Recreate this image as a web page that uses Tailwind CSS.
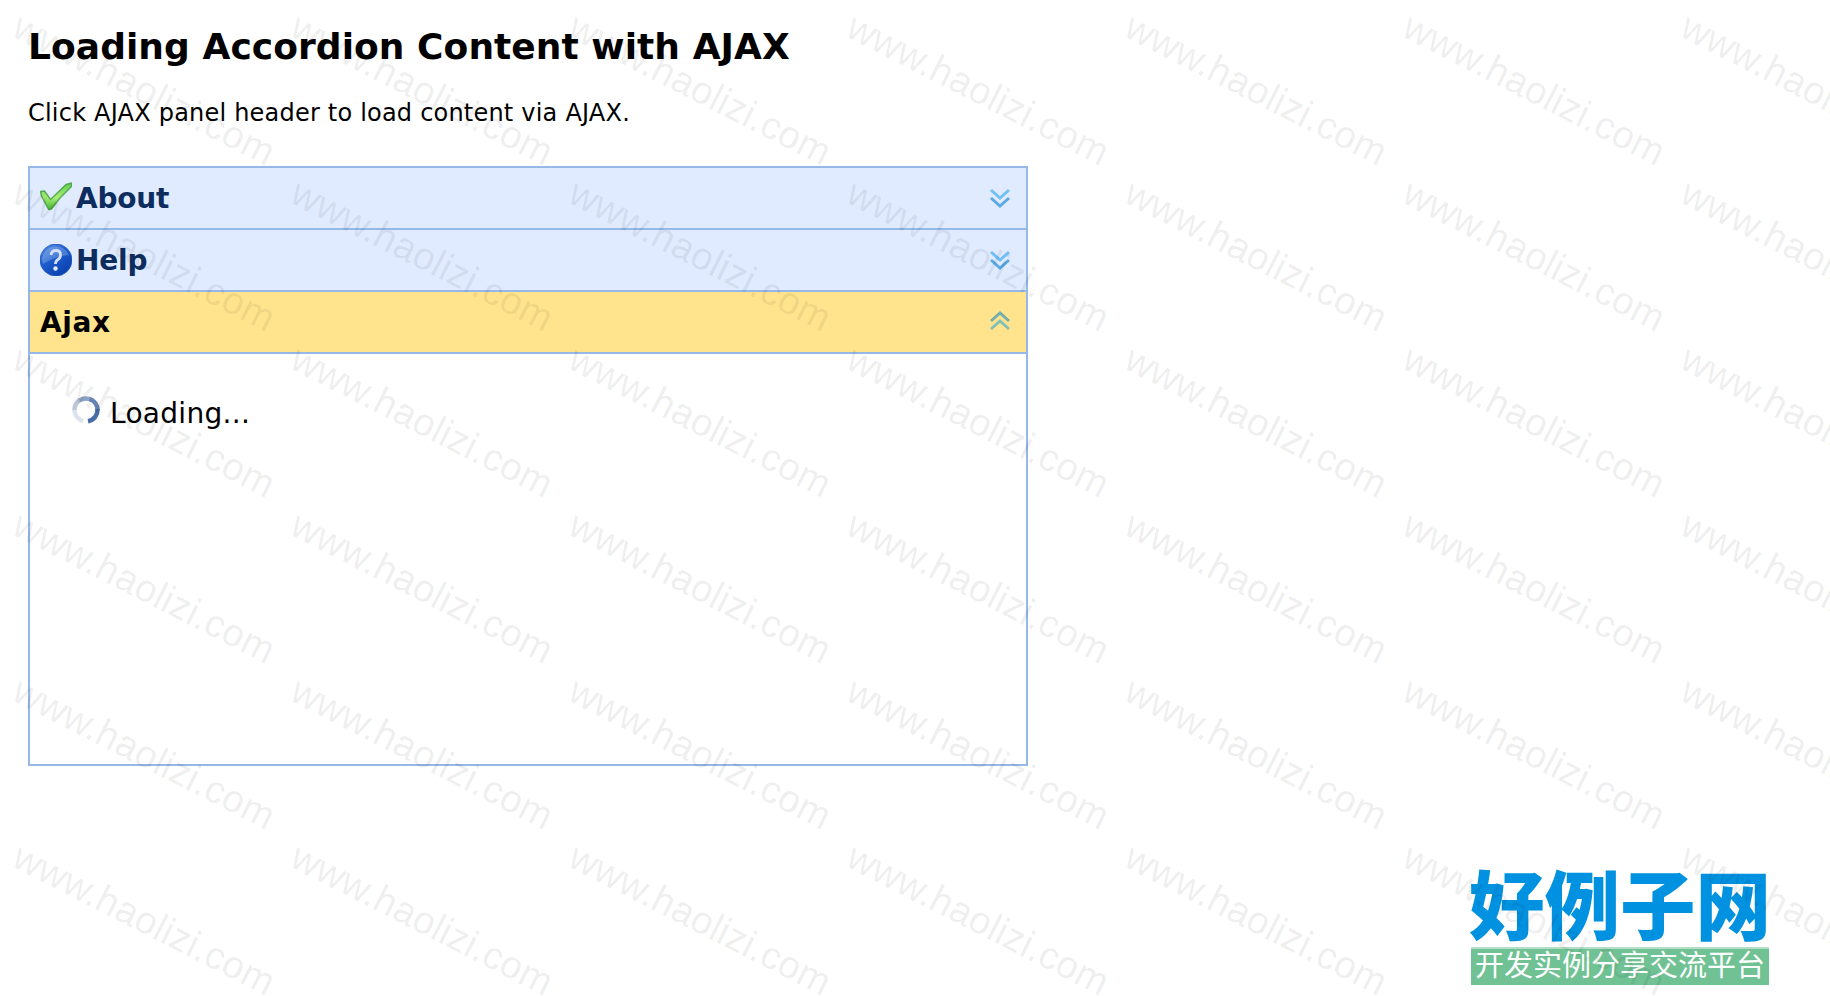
<!DOCTYPE html>
<html lang="en">
<head>
  <meta charset="UTF-8">
  <title>Loading Accordion Content with AJAX</title>
  <script src="https://cdn.jsdelivr.net/npm/@tailwindcss/browser@4"></script>
</head>
<body class="bg-white text-black font-['DejaVu_Sans',Verdana,sans-serif] h-screen overflow-hidden">
  <main class="pl-7 pt-[25px]">
    <h2 class="text-[36px] leading-[44px] font-bold tracking-[0.06px] whitespace-nowrap">Loading Accordion Content with AJAX</h2>
    <p class="mt-[30px] text-2xl leading-7 tracking-[0.21px] whitespace-nowrap">Click AJAX panel header to load content via AJAX.</p>

    <div class="mt-[39px] w-[1000px] h-[600px] border-2 border-[#95b8e7]">
      <div class="flex items-center h-[62px] px-[10px] bg-[#e0ebff] border-b-2 border-[#95b8e7]">
        <svg class="w-8 h-8" viewBox="0 0 32 32">
          <defs>
            <linearGradient id="green" x1="0" y1="0" x2="0" y2="1">
              <stop offset="0" stop-color="#5fce50"/>
              <stop offset="0.55" stop-color="#a8ee74"/>
              <stop offset="1" stop-color="#43b238"/>
            </linearGradient>
          </defs>
          <path d="M0.500 9.500 L4.500 9 L10.500 17.500 L26 2.500 L31.500 1 L31.500 4.500 L20 16 L11.500 27 L8.500 27.500 L1.500 14 Z" fill="url(#green)" stroke="#3f9a3c" stroke-opacity="0.800" stroke-width="1.400" stroke-linejoin="round"/>
        </svg>
        <span class="ml-1 pt-0.5 text-[28px] font-bold tracking-[-0.2px] text-[#0e2d5f]">About</span>
        <svg class="ml-auto mr-1 w-6 h-6" viewBox="0 0 24 24" fill="none" stroke-width="3">
          <path d="M3 4 L12 12 L21 4" stroke="#71c0f5"/>
          <path d="M3 12 L12 20 L21 12" stroke="#5aa9e6"/>
        </svg>
      </div>
      <div class="flex items-center h-[62px] px-[10px] bg-[#e0ebff] border-b-2 border-[#95b8e7]">
        <svg class="w-8 h-8" viewBox="0 0 32 32">
          <defs>
            <linearGradient id="blue" x1="0" y1="0" x2="0.700" y2="1">
              <stop offset="0" stop-color="#5d94e4"/>
              <stop offset="0.45" stop-color="#1d5fd0"/>
              <stop offset="1" stop-color="#0a3fae"/>
            </linearGradient>
          </defs>
          <circle cx="16" cy="16" r="16" fill="url(#blue)" stroke="#2458b8" stroke-width="0.800"/>
          <path d="M2 16 A14 14 0 0 1 29 11 Q15 12 3 20 Z" fill="#fff" fill-opacity="0.220"/>
          <path d="M11 11 Q11.500 6.500 16 6.500 Q20.500 6.500 20.500 11 Q20.500 14 18 15.500 Q15.500 17 15.500 20" fill="none" stroke="#d3e0f6" stroke-width="2.800"/>
          <circle cx="15.500" cy="24.500" r="2.200" fill="#e4ecfb"/>
        </svg>
        <span class="ml-1 pt-0.5 text-[28px] font-bold tracking-[-0.2px] text-[#0e2d5f]">Help</span>
        <svg class="ml-auto mr-1 w-6 h-6" viewBox="0 0 24 24" fill="none" stroke-width="3">
          <path d="M3 4 L12 12 L21 4" stroke="#71c0f5"/>
          <path d="M3 12 L12 20 L21 12" stroke="#5aa9e6"/>
        </svg>
      </div>
      <div class="flex items-center h-[62px] px-[10px] bg-[#ffe48d] border-b-2 border-[#95b8e7]">
        <span class="pt-0.5 text-[28px] font-bold tracking-[0.6px]">Ajax</span>
        <svg class="ml-auto mr-1 mb-0.5 w-6 h-6" viewBox="0 0 24 24" fill="none" stroke-width="3">
          <path d="M3 12 L12 4 L21 12" stroke="#73afad"/>
          <path d="M3 20 L12 12 L21 20" stroke="#82c0b5"/>
        </svg>
      </div>
      <div class="flex items-center pl-[42px] pt-10">
        <svg class="w-7 h-7 mb-2" viewBox="0 0 28 28" fill="none" stroke-width="4.500">
          <path d="M11 25 A11.500 11.500 0 0 1 2.500 13" stroke="#dde3ec"/>
          <path d="M2.500 14 A11.500 11.500 0 0 1 8 4" stroke="#bcc7d8"/>
          <path d="M7.500 4.500 A11.500 11.500 0 0 1 18 3.200" stroke="#8da3c4"/>
          <path d="M17.500 3 A11.500 11.500 0 0 1 25.500 14" stroke="#6584b4"/>
          <path d="M25.500 13 A11.500 11.500 0 0 1 16 25.300" stroke="#486ca5"/>
        </svg>
        <span class="ml-[10px] text-[28px] leading-10 tracking-[0.3px]">Loading...</span>
      </div>
    </div>
  </main>

  <div class="absolute left-[1471px] top-[863px] w-[298px] font-['Noto_Sans_CJK_SC',sans-serif] whitespace-nowrap" lang="zh-CN">
    <div class="h-[84px] -ml-0.5 text-[75.500px] leading-[76px] font-black text-[#0092e0]">好例子网</div>
    <div class="h-[38px] bg-[#70c294] border-t-2 border-[#b4dfc6] text-white text-[29px] leading-[29px] text-center">开发实例分享交流平台</div>
  </div>

  <svg id="watermark" class="absolute inset-0 w-full h-full pointer-events-none fill-black/7 stroke-black/7 text-[38.500px] font-['Liberation_Sans',Arial,sans-serif]" stroke-width="0.400"></svg>

  <script>
    const layer = document.getElementById('watermark');

    for (let row = 0; row < 6; row++) {
      for (let col = 0; col < 7; col++) {
        const mark = document.createElementNS('http://www.w3.org/2000/svg', 'text');
        mark.textContent = 'www.haolizi.com';
        mark.setAttribute('textLength', 288);
        mark.setAttribute('transform', `translate(${10 + col * 278} ${35.5 + row * 166}) rotate(27)`);
        layer.appendChild(mark);
      }
    }
  </script>
</body>
</html>
